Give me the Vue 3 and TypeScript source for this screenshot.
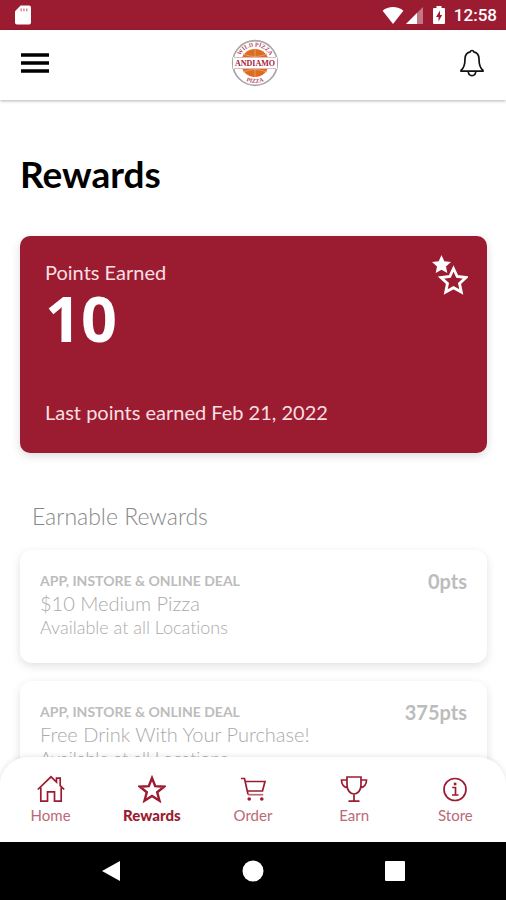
<script setup lang="ts">
interface Reward {
  id: number
  channel: string
  title: string
  place: string
  points: number
}

interface Tab {
  id: string
  label: string
}

const rewards: Reward[] = [
  { id: 1, channel: 'APP, INSTORE & ONLINE DEAL', title: '$10 Medium Pizza', place: 'Available at all Locations', points: 0 },
  { id: 2, channel: 'APP, INSTORE & ONLINE DEAL', title: 'Free Drink With Your Purchase!', place: 'Available at all Locations', points: 375 },
]

const tabs: Tab[] = [
  { id: 'home', label: 'Home' },
  { id: 'rewards', label: 'Rewards' },
  { id: 'order', label: 'Order' },
  { id: 'earn', label: 'Earn' },
  { id: 'store', label: 'Store' },
]

const activeTab = 'rewards'
</script>

<template>
  <div class="screen">
    <div class="status">
      <svg class="sd" viewBox="0 0 17 20" aria-hidden="true">
        <path d="M6 0h9a2 2 0 0 1 2 2v16a2 2 0 0 1-2 2H2a2 2 0 0 1-2-2V6z" fill="#fff" />
        <path d="M6.500 3v3M9.500 3v3M12.500 3v3" stroke="#c8707f" stroke-width="1.300" />
      </svg>
      <div class="signals">
        <svg class="wifi" viewBox="0 0 22 18" aria-hidden="true"><path d="M11 18 0 4C6-1.300 16-1.300 22 4z" fill="#fff" /></svg>
        <svg class="cell" viewBox="0 0 17 17" aria-hidden="true">
          <path d="M17 0v17H0z" fill="#fff" opacity=".4" />
          <path d="M11 6v11H0z" fill="#fff" />
        </svg>
        <svg class="battery" viewBox="0 0 12 18" aria-hidden="true">
          <path d="M3.500 0h5v2H11a1 1 0 0 1 1 1v14a1 1 0 0 1-1 1H1a1 1 0 0 1-1-1V3a1 1 0 0 1 1-1h2.500z" fill="#fff" />
          <path d="M7 4.500 3 11h2.500v4.500L9.200 9H7z" fill="#9b1c31" />
        </svg>
        <time class="clock">12:58</time>
      </div>
    </div>

    <header class="header">
      <button class="icon-button" type="button" aria-label="Menu">
        <svg class="menu" viewBox="0 0 28 20"><path d="M0 2h28M0 10h28M0 18h28" stroke="#000" stroke-width="3.400" /></svg>
      </button>
      <svg class="logo" viewBox="0 0 48 48" role="img" aria-label="Andiamo">
        <defs>
          <path id="arc-top" d="M7.500 24a16.500 16.500 0 0 1 33 0" />
          <path id="arc-bottom" d="M4 24a20 20 0 0 0 40 0" />
        </defs>
        <circle cx="24" cy="24" r="22.300" fill="#fff" stroke="#aaa3a8" stroke-width="1.700" />
        <circle cx="24" cy="24" r="14" fill="#dd6b20" />
        <path d="M12 15q12 5 24 0M12 33q12-5 24 0M24 10v28" stroke="#ef9a55" fill="none" />
        <path d="M2 18h44v12H2z" fill="#fff" />
        <path d="M3 18.500h42M3 29.500h42" stroke="#c9a0a8" stroke-width=".7" />
        <text class="logo-name" x="24" y="27" text-anchor="middle">ANDIAMO</text>
        <text class="logo-ring"><textPath href="#arc-top" startOffset="50%" text-anchor="middle">WILD PIZZA</textPath></text>
        <text class="logo-ring"><textPath href="#arc-bottom" startOffset="50%" text-anchor="middle">PIZZA</textPath></text>
      </svg>
      <button class="icon-button" type="button" aria-label="Notifications">
        <svg class="bell" viewBox="0 0 24 28" fill="none" stroke="#111" stroke-width="1.700" stroke-linejoin="round">
          <path d="M12 1.500c1 0 1.600.6 1.800 1.400 3.200.8 5.200 3.500 5.200 7 0 6 1 9 4 11.500v.8H1v-.8c3-2.500 4-5.500 4-11.500 0-3.500 2-6.200 5.200-7 .2-.8.800-1.400 1.800-1.400z" />
          <path d="M8.200 22.500c.3 2.700 1.800 4.100 3.800 4.100s3.500-1.400 3.800-4.100" />
        </svg>
      </button>
    </header>

    <main class="content">
      <h1 class="title">Rewards</h1>

      <section class="points">
        <div class="points-top">
          <div>
            <p class="points-label">Points Earned</p>
            <p class="points-value">10</p>
          </div>
          <svg class="stars" viewBox="0 0 36 40" aria-hidden="true">
            <path d="M9.500 0 12.300 6.200 19 7 14 11.500 15.300 18 9.500 14.700 3.700 18 5 11.500 0 7 6.700 6.200z" fill="#fff" />
            <path d="M21.500 13.500 25.200 21.500 34 22.500 27.500 28.400 29.300 37 21.500 32.700 13.700 37 15.500 28.400 9 22.500 17.800 21.500z" fill="#9b1c31" stroke="#fff" stroke-width="2.800" />
          </svg>
        </div>
        <p class="points-label">Last points earned Feb 21, 2022</p>
      </section>

      <h2 class="subtitle">Earnable Rewards</h2>

      <ul class="rewards">
        <li v-for="reward in rewards" :key="reward.id" class="reward">
          <div class="reward-text">
            <p class="channel">{{ reward.channel }}</p>
            <p class="reward-title">{{ reward.title }}</p>
            <p class="place">{{ reward.place }}</p>
          </div>
          <span class="cost">{{ reward.points }}pts</span>
        </li>
      </ul>
    </main>

    <nav class="tabs" aria-label="Main">
      <a v-for="tab in tabs" :key="tab.id" class="tab" :class="{ active: tab.id === activeTab }" :href="'#' + tab.id">
        <svg class="tab-icon" viewBox="0 0 28 28" fill="none" stroke="#9b1c31" stroke-width="1.700" aria-hidden="true">
          <template v-if="tab.id === 'home'">
            <path d="M.8 14.500 14 1.800l5.500 5.300V3.200h3.700v7.400l4 3.900M3.800 12.500v13.700h6.700v-9.400h7v9.400h6.700V12.500" />
          </template>
          <template v-else-if="tab.id === 'rewards'">
            <path d="M14 3 17.200 11.200 26 11.700 19.200 17.200 21.500 25.700 14 20.900 6.500 25.700 8.800 17.200 2 11.700 10.800 11.200z" stroke-width="2.400" />
          </template>
          <template v-else-if="tab.id === 'order'">
            <path d="M2 3.500h3.500l3.500 15.800M6.300 6.500h19.700L23.500 16H8.300" />
            <path d="M8.800 19.700h15.400" stroke="#bb6978" />
            <circle cx="10.200" cy="24" r="1.800" fill="#9b1c31" stroke="none" />
            <circle cx="22.800" cy="24" r="1.800" fill="#9b1c31" stroke="none" />
          </template>
          <template v-else-if="tab.id === 'earn'">
            <path d="M7 2h14v8c0 5-3 9-7 9s-7-4-7-9zM7 5H1.500c0 5 2 7 6.300 8M21 5h5.500c0 5-2 7-6.300 8M14 19v6.500M8.500 26.200h11" />
          </template>
          <template v-else>
            <circle cx="14" cy="14.500" r="11" />
            <path d="M11.200 12.500h3.300v7.300M11 20h6.500" />
            <path d="M12.800 9h2.600" stroke-width="2.600" />
          </template>
        </svg>
        <span>{{ tab.label }}</span>
      </a>
    </nav>

    <div class="system">
      <button class="system-button" type="button" aria-label="Back">
        <svg viewBox="0 0 22 22"><path d="M20 1v20L2 11z" fill="#fff" /></svg>
      </button>
      <button class="system-button" type="button" aria-label="Home screen">
        <svg viewBox="0 0 22 22"><circle cx="11" cy="11" r="10.500" fill="#fff" /></svg>
      </button>
      <button class="system-button" type="button" aria-label="Recent apps">
        <svg viewBox="0 0 22 22"><rect x="1" y="1" width="20" height="20" rx="1" fill="#fff" /></svg>
      </button>
    </div>
  </div>
</template>

<style>
body {
  margin: 0;
  background: #fff;
}
</style>

<style scoped>
.screen {
  display: flex;
  flex-direction: column;
  height: 100vh;
  background: #fff;
  font-family: Lato, "Open Sans", sans-serif;
  font-variant-ligatures: none;
}

h1, h2, p, ul {
  margin: 0;
  padding: 0;
}

button {
  display: flex;
  padding: 0;
  border: 0;
  background: none;
}

.status {
  display: flex;
  flex: none;
  align-items: center;
  justify-content: space-between;
  height: 30px;
  padding: 0 9px 0 15px;
  background: #9b1c31;
}

.sd {
  width: 16px;
  height: 20px;
}

.signals {
  display: flex;
  align-items: center;
}

.wifi {
  width: 22px;
  height: 17px;
}

.cell {
  width: 17px;
  height: 17px;
  margin: 0 10px 0 2px;
}

.battery {
  width: 12px;
  height: 18px;
  margin-right: 9px;
}

.clock {
  color: #fff;
  font: 500 17px/30px Roboto, sans-serif;
}

.header {
  position: relative;
  z-index: 1;
  display: flex;
  flex: none;
  align-items: center;
  justify-content: space-between;
  box-sizing: border-box;
  height: 70px;
  padding: 0 22px 4px 21px;
  background: #fff;
  box-shadow: 0 1px 3px rgba(0, 0, 0, 0.3);
}

.menu {
  width: 28px;
  height: 20px;
}

.logo {
  width: 48px;
  height: 48px;
}

.logo-name {
  fill: #a51c3a;
  font: 700 8px "Liberation Serif", serif;
}

.logo-ring {
  fill: #b84a68;
  font: 700 6px "Liberation Serif", serif;
}

.bell {
  width: 24px;
  height: 28px;
}

.content {
  flex: 1;
  min-height: 0;
  padding: 54px 19px 0 20px;
  overflow-y: auto;
  scrollbar-width: none;
}

.title {
  color: #000;
  font-size: 37px;
  font-weight: 700;
  line-height: 40px;
}

.points {
  display: flex;
  flex-direction: column;
  justify-content: space-between;
  box-sizing: border-box;
  min-height: 217px;
  margin-top: 42px;
  padding: 24px 19px 29px 25px;
  border-radius: 10px;
  background: #9b1c31;
  box-shadow: 0 3px 10px rgba(0, 0, 0, 0.14);
  color: #fff;
}

.points-top {
  display: flex;
  justify-content: space-between;
}

.points-label {
  color: #f9dfe0;
  font-size: 20px;
  line-height: 24px;
}

.points-value {
  font-family: "Open Sans", sans-serif;
  font-size: 63px;
  font-weight: 700;
  line-height: 68px;
}

.stars {
  width: 36px;
  height: 40px;
  margin-top: -5px;
}

.subtitle {
  margin: 50px 0 0 12px;
  color: #888;
  font-size: 23px;
  font-weight: 300;
  line-height: 26px;
}

.rewards {
  display: flex;
  flex-direction: column;
  gap: 18px;
  margin-top: 21px;
  list-style: none;
}

.reward {
  display: flex;
  justify-content: space-between;
  box-sizing: border-box;
  min-height: 113px;
  padding: 21px 20px;
  border-radius: 12px;
  background: #fff;
  box-shadow: 0 3px 10px rgba(0, 0, 0, 0.12);
  color: #bcbcbc;
}

.channel {
  font-size: 14px;
  font-weight: 700;
  line-height: 20px;
}

.reward-title {
  color: #aaa;
  font-size: 20px;
  font-weight: 300;
  line-height: 24px;
}

.place {
  color: #aaa;
  font-size: 18px;
  font-weight: 300;
  line-height: 24px;
}

.cost {
  font-size: 20px;
  font-weight: 700;
  line-height: 20px;
}

.tabs {
  position: relative;
  display: flex;
  flex: none;
  box-sizing: border-box;
  height: 85px;
  margin-top: -30px;
  padding-top: 18px;
  border-radius: 28px 28px 0 0;
  background: #fff;
  box-shadow: 0 0 6px rgba(0, 0, 0, 0.12);
}

.tab {
  display: flex;
  flex: 1;
  flex-direction: column;
  align-items: center;
  gap: 2px;
  color: #bb6978;
  font-size: 15px;
  line-height: 20px;
  text-decoration: none;
}

.tab.active {
  color: #9b1c31;
  font-weight: 900;
}

.tab-icon {
  width: 28px;
  height: 28px;
}

.system {
  position: relative;
  display: flex;
  flex: none;
  align-items: center;
  justify-content: center;
  gap: 120px;
  height: 58px;
  background: #000;
}

.system-button svg {
  width: 22px;
  height: 22px;
}
</style>
